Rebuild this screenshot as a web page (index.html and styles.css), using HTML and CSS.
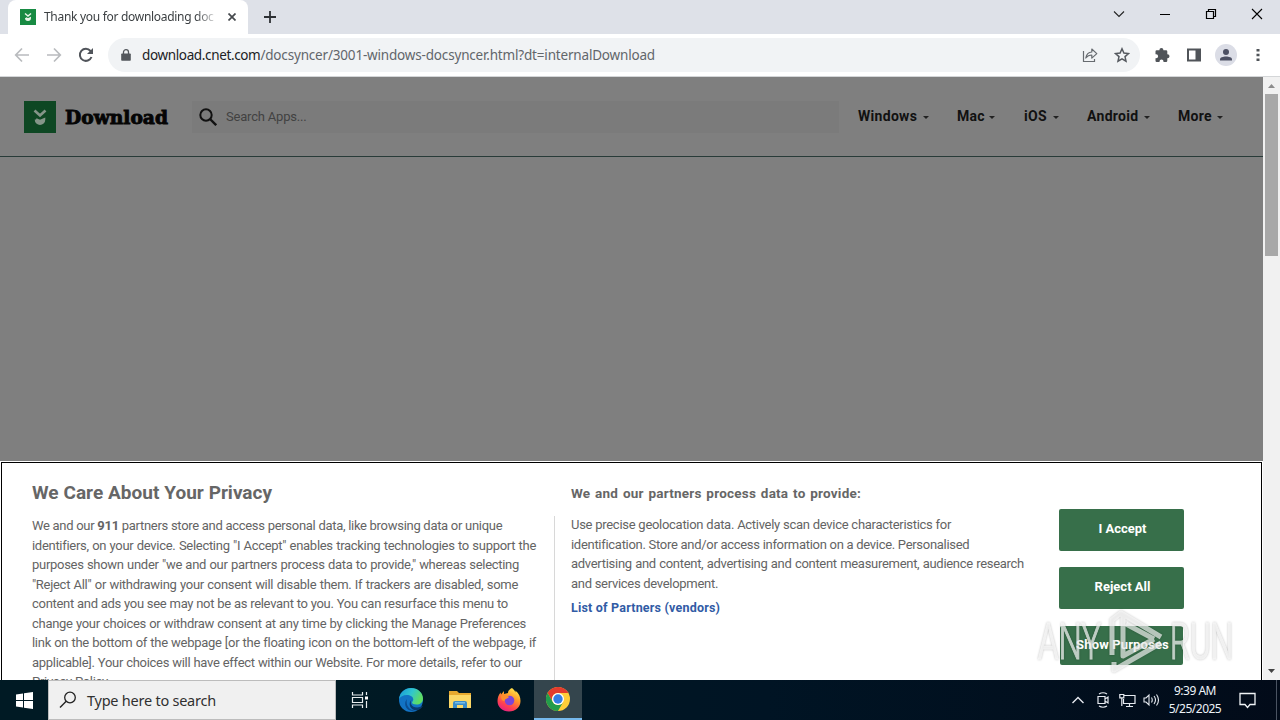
FILE: index.html
```html
<!DOCTYPE html>
<html lang="en">
<head>
<meta charset="utf-8">
<title>Thank you for downloading docsyncer</title>
<link rel="stylesheet" href="styles.css">
</head>
<body>
<div class="screen">
  <header class="tabbar">
    <div class="tab">
      <svg class="favicon" width="16" height="16" viewBox="0 0 32 32"><path fill="#188b43" d="M0 0h32v32H0z"/><path d="M10 9l6 5 6-5M11.500 18l4.500 2 4.500-2c0 6-9 6-9 0" fill="none" stroke="#e9f5e9" stroke-width="3"/></svg>
      <span class="tab-title">Thank you for downloading doc</span>
      <svg class="tab-close" width="8" height="8" viewBox="0 0 8 8"><path d="M.5.5l7 7m0-7l-7 7" stroke="#45494d" stroke-width="1.7"/></svg>
    </div>
    <svg class="newtab" width="12" height="12" viewBox="0 0 12 12"><path d="M6 0v12M0 6h12" stroke="#2e3135" stroke-width="1.8"/></svg>
    <div class="wincontrols">
      <svg width="12" height="12" viewBox="0 0 12 12"><path d="M1 3.5l5 5 5-5" fill="none" stroke="#222" stroke-width="1.1"/></svg>
      <svg width="12" height="12" viewBox="0 0 12 12"><path d="M1 6.5h10" stroke="#000"/></svg>
      <svg width="12" height="12" viewBox="0 0 12 12"><path d="M1.5 3.5h7v7h-7zM3.5 3V1.500h7v7H9" fill="none" stroke="#000" stroke-width="1.2"/></svg>
      <svg width="12" height="12" viewBox="0 0 12 12"><path d="M1 1l10 10M11 1L1 11" stroke="#000" stroke-width="1.1"/></svg>
    </div>
  </header>

  <div class="toolbar">
    <div class="navbtns">
      <svg width="16" height="16" viewBox="0 0 16 16"><path d="M15 8H2M8 1.500L1.700 8 8 14.500" fill="none" stroke="#b9bbbe" stroke-width="1.700"/></svg>
      <svg width="16" height="16" viewBox="0 0 16 16"><path d="M1 8h13M8 1.500L14.300 8 8 14.500" fill="none" stroke="#b9bbbe" stroke-width="1.700"/></svg>
      <svg width="16" height="16" viewBox="0 0 16 16"><path d="M13.500 10A6 6 0 1 1 12.500 4L14 5.500" fill="none" stroke="#50545a" stroke-width="2"/><path d="M15 1v6H9z" fill="#50545a"/></svg>
    </div>
    <div class="omnibox">
      <svg class="lock" width="10" height="12" viewBox="0 0 10 12"><path d="M1 4.500h8q.8 0 .8.800v5.700q0 .8-.8.8H1q-.8 0-.8-.8V5.300q0-.8.8-.8z" fill="#53575c"/><path d="M2.500 5V3a2.500 2.300 0 0 1 5 0v2" fill="none" stroke="#53575c" stroke-width="1.300"/></svg>
      <span class="url"><b>download.cnet.com</b>/docsyncer/3001-windows-docsyncer.html?dt=internalDownload</span>
      <svg class="share" width="16" height="16" viewBox="0 0 16 16"><path d="M1.500 4v10.500h11V12" fill="none" stroke="#676b70" stroke-width="1.200"/><path d="M3.800 11C4.500 7 6.500 5.200 9.800 5V2l5 4.600-5 4.500V8C7.200 8 5.300 9 3.800 11z" fill="none" stroke="#676b70" stroke-width="1.200" stroke-linejoin="round"/></svg>
      <svg width="16" height="16" viewBox="0 0 16 16"><path d="M8 1.800l1.900 4.300 4.600.4-3.500 3.100 1 4.600L8 11.800l-4 2.400 1-4.600-3.500-3.100 4.600-.4z" fill="none" stroke="#55595f" stroke-width="1.500"/></svg>
    </div>
    <div class="tools">
      <svg width="16" height="16" viewBox="0 0 16 16"><path d="M1.500 4.500q0-1.200 1.200-1.200h2.700V3a2 2 0 0 1 4 0v.3h2.700q1.200 0 1.200 1.200v2.700h.2a2 2 0 0 1 0 4h-.2v2.600q0 1.200-1.200 1.200H9.500v-.6a2 2 0 0 0-4 0v.6H2.700q-1.200 0-1.200-1.200v-2.500h.6a2 2 0 0 0 0-4h-.6z" fill="#505459"/></svg>
      <svg width="16" height="16" viewBox="0 0 16 16"><path d="M1 1.500h14v13H1z" fill="#505459"/><path d="M3 3.500h6.500v9H3z" fill="#fff"/></svg>
      <svg width="22" height="22" viewBox="0 0 22 22"><circle cx="11" cy="11" r="11" fill="#dbdde6"/><circle cx="11" cy="8" r="3" fill="#4c5063"/><path d="M5 16.500v-1.200C5 11.500 17 11.500 17 15.300v1.200z" fill="#4c5063"/></svg>
      <svg width="4" height="14" viewBox="0 0 4 14"><path d="M.5 1h3v2.600h-3zM.5 5.700h3v2.600h-3zM.5 10.400h3V13h-3z" fill="#505459"/></svg>
    </div>
  </div>

  <div class="viewport">
    <main class="page">
      <div class="siteheader">
        <svg width="32" height="32" viewBox="0 0 32 32"><path fill="#0e4723" d="M0 0h32v32H0z"/><path d="M10.500 9.500l5.500 5 5.500-5M12 18.500l4 1.800 4-1.800c0 5.500-8 5.500-8 0" fill="none" stroke="#859589" stroke-width="2.600"/></svg>
        <svg class="wordmark" width="106" height="28" viewBox="0 0 106 28"><text x="1" y="21" textLength="103" lengthAdjust="spacingAndGlyphs">Download</text></svg>
        <div class="sitesearch">
          <svg width="18" height="18" viewBox="0 0 18 18"><circle cx="7" cy="7" r="5.700" fill="none" stroke="#111" stroke-width="2"/><path d="M11 11l6.200 6.200" stroke="#111" stroke-width="2.400"/></svg>
          <span>Search Apps...</span>
        </div>
        <nav class="menu">
          <span class="m1">Windows<i></i></span><span class="m2">Mac<i></i></span><span class="m3">iOS<i></i></span><span class="m4">Android<i></i></span><span class="m5">More<i></i></span>
        </nav>
      </div>
      <section class="consent">
        <div class="col-privacy">
          <h2>We Care About Your Privacy</h2>
          <div class="copy bordered">
            <p class="w470">We and our <b>911</b> partners store and access personal data, like browsing data or unique</p>
            <p class="w504">identifiers, on your device. Selecting "I Accept" enables tracking technologies to support the</p>
            <p class="w487">purposes shown under "we and our partners process data to provide," whereas selecting</p>
            <p class="w486">"Reject All" or withdrawing your consent will disable them. If trackers are disabled, some</p>
            <p class="w476">content and ads you see may not be as relevant to you. You can resurface this menu to</p>
            <p class="w494">change your choices or withdraw consent at any time by clicking the Manage Preferences</p>
            <p class="w504">link on the bottom of the webpage [or the floating icon on the bottom-left of the webpage, if</p>
            <p class="w490">applicable]. Your choices will have effect within our Website. For more details, refer to our</p>
            <p class="w78">Privacy Policy.</p>
          </div>
        </div>
        <div class="col-partners">
          <h3>We and our partners process data to provide:</h3>
          <div class="copy">
            <p class="w380">Use precise geolocation data. Actively scan device characteristics for</p>
            <p class="w398">identification. Store and/or access information on a device. Personalised</p>
            <p class="w453">advertising and content, advertising and content measurement, audience research</p>
            <p class="w146">and services development.</p>
          </div>
          <a class="vendors">List of Partners (vendors)</a>
        </div>
        <div class="actions">
          <div class="btn accept">I Accept</div>
          <div class="btn reject">Reject All</div>
          <div class="btn purposes">Show Purposes</div>
        </div>
      </section>
    </main>
    <aside class="scrollbar">
      <svg width="7" height="4" viewBox="0 0 7 4"><path d="M0 4L3.500 0 7 4z" fill="#8c8c8c"/></svg>
      <div class="thumb"></div>
      <svg class="down" width="7" height="4" viewBox="0 0 7 4"><path d="M0 0l3.500 4L7 0z" fill="#444"/></svg>
    </aside>
  </div>

  <footer class="taskbar">
    <div class="start"><svg width="17" height="17" viewBox="0 0 17 17"><path d="M0 2.500l7-1v6.600H0zM8 1.300L17 0v8.100H8zM0 9h7v6.500l-7-1zM8 9h9v8l-9-1.300z" fill="#fff"/></svg></div>
    <div class="search">
      <svg width="18" height="18" viewBox="0 0 18 18"><circle cx="11" cy="6.500" r="5.300" fill="none" stroke="#222" stroke-width="1.300"/><path d="M7.200 10.300L1 16.500" stroke="#222" stroke-width="1.400"/></svg>
      <span>Type here to search</span>
    </div>
    <div class="apps">
      <div><svg width="18" height="18" viewBox="0 0 18 18"><path d="M1.500 1v3h10V1M1.500 17v-3h10v3M1.500 6.500h10v5h-10zM15.500 1v3M15.500 10v7" fill="none" stroke="#e8eef0" stroke-width="1.200"/><path d="M14 5.500h3v3h-3z" fill="#fff"/></svg></div>
      <div><svg width="26" height="26" viewBox="0 0 26 26"><defs><linearGradient id="eg" x1="0" y1="0" x2="1" y2=".4"><stop offset="0" stop-color="#1695d8"/><stop offset=".55" stop-color="#30c6cf"/><stop offset="1" stop-color="#5fdc62"/></linearGradient></defs><circle cx="13" cy="13" r="12" fill="#1273c4"/><path d="M1 12C2 5 7 1 13 1c7 0 12 5 12 10.500 0 4-3 6-6.500 6-3 0-4.500-1-4.500-2 0-.8 1.300-1.200 1.300-3C15.300 9.500 12 8 9 8c-4 0-7 2-8 4z" fill="url(#eg)"/><path d="M9 12c-2 7 4 13 10 11-9 4-15-5-10-11z" fill="#0b4d91"/><path d="M14.200 12c-3.200 3.500-.8 8.500 5 8.500 2 0 3.500-.8 4.700-1.500.5-.3.900.2.500.8-1.300 1.700-3 3-5 3.500-7 .7-10.500-7-5.200-11.300z" fill="#0a3a70"/></svg></div>
      <div><svg width="22" height="20" viewBox="0 0 22 20"><path d="M0 1h8l2 2h12v15H0z" fill="#e7a92f"/><path d="M0 5h22v13H0z" fill="#fbd766"/><path d="M4 18v-5q0-2 2-2h10q2 0 2 2v5h-4v-3H8v3z" fill="#3a8cc9"/><path d="M6 12h10v1.500H6z" fill="#78bce4"/></svg></div>
      <div><svg width="24" height="24" viewBox="0 0 24 24"><defs><linearGradient id="fx" x1=".8" y1="0" x2=".3" y2="1"><stop offset="0" stop-color="#fff050"/><stop offset=".4" stop-color="#ff9a28"/><stop offset=".75" stop-color="#ff4050"/><stop offset="1" stop-color="#e52084"/></linearGradient></defs><path d="M15 0c2 1.500 3 3 3.500 4.500 0-1 0-1.500-.2-2C22 5 23.500 9 23.500 13c0 6-5 10.500-11.500 10.500S.5 19 .5 13c0-3 1-6 3-8.500l.5 2L7 3v3l4-1c0-2.500 2-4 4-5z" fill="url(#fx)"/><circle cx="12.500" cy="12.500" r="4.800" fill="#7c44d9"/><path d="M4 8c3-2 6-1 8 1-1 2-4 1-4.500 4C5 13 4 11 4 8z" fill="#ff8f2c"/></svg></div>
      <div class="active"><svg width="24" height="24" viewBox="0 0 24 24"><circle cx="12" cy="12" r="12" fill="#ffcd38"/><path d="M1.600 6A12 12 0 0 1 22.400 6H12a6 6 0 0 0-5.200 9z" fill="#e33b2e"/><path d="M1.600 6A12 12 0 0 0 12 24l5.200-9a6 6 0 0 1-10.400 0z" fill="#229c4b"/><circle cx="12" cy="12" r="6" fill="#fff"/><circle cx="12" cy="12" r="4.700" fill="#347de4"/></svg></div>
    </div>
    <div class="tray">
      <svg width="12" height="8" viewBox="0 0 12 8"><path d="M.5 7L6 1.500 11.500 7" fill="none" stroke="#e6eaf0" stroke-width="1.400"/></svg>
      <svg class="meet" width="12" height="16" viewBox="0 0 12 16"><path d="M1 4.500h7v7H1zM8 7l3-2v6L8 9M2 2q4-2.500 8 0M2 14q4 2.500 8 0" fill="none" stroke="#e6eaf0" stroke-width="1.200"/></svg>
      <svg class="net" width="17" height="15" viewBox="0 0 17 15"><path d="M5 2.500h11v8H4.500V6M7 13.500h7M10.500 10.500v3" fill="none" stroke="#e6eaf0" stroke-width="1.200"/><path d="M.8 1.500h4v3.300h-4zM2.800 5v8" fill="none" stroke="#e6eaf0" stroke-width="1.200"/></svg>
      <svg class="vol" width="17" height="14" viewBox="0 0 17 14"><path d="M1 5h2l3-3v10L3 9H1zM8.500 4.500q1.500 2.500 0 5M11 3q3 4 0 8M13.500 1.500q4 5.500 0 11" fill="none" stroke="#e6eaf0" stroke-width="1.100"/></svg>
      <div class="clock"><span>9:39 AM</span><span>5/25/2025</span></div>
      <svg class="note" width="17" height="17" viewBox="0 0 17 17"><path d="M1 1.500h15v11h-5L8.500 15.500 6 12.500H1z" fill="none" stroke="#f0f3f6" stroke-width="1.300"/></svg>
    </div>
  </footer>

  <svg class="watermark" width="208" height="74" viewBox="0 0 208 74">
    <g class="wm-letters"><text x="4" y="53" textLength="63" lengthAdjust="spacingAndGlyphs">ANY</text><text x="136" y="53" textLength="63" lengthAdjust="spacingAndGlyphs">RUN</text></g>
    <path class="wm-play" d="M78 49V14l9-7 40 24M89 9v41l31-17M80 56v8l47-27M92 18l28 15"/>
  </svg>
</div>
</body>
</html>
```
FILE: styles.css
```css
* { box-sizing: border-box; }
body { margin: 0; font-family: Roboto, "Liberation Sans", sans-serif; }
svg { display: block; flex: none; }
p, h2, h3 { margin: 0; }
.screen { position: relative; width: 1280px; height: 720px; overflow: hidden; display: flex; flex-direction: column; background: #fff; }

.tabbar { height: 34px; background: #dee1e8; display: flex; align-items: flex-start; }
.tab { width: 240px; height: 34px; margin-left: 8px; background: #fff; border-radius: 8px 8px 0 0; display: flex; align-items: center; padding-left: 12px; }
.tab-title { width: 172px; margin-left: 8px; white-space: nowrap; font: 12px/18px "Noto Sans", sans-serif; letter-spacing: -.3px; color: #3c4043; -webkit-mask-image: linear-gradient(90deg, #000 88%, transparent 102%); mask-image: linear-gradient(90deg, #000 88%, transparent 102%); }
.tab-close { margin-left: 12px; }
.newtab { margin: 11px 0 0 16px; }
.wincontrols { display: flex; gap: 34px; margin: 8px 17px 0 auto; }

.toolbar { height: 43px; background: #fff; border-bottom: 1px solid #d4d6d8; display: flex; align-items: center; }
.navbtns { display: flex; gap: 16px; margin-left: 14px; }
.omnibox { width: 1032px; height: 34px; margin-left: 14px; padding: 0 10px 0 13px; border-radius: 17px; background: #f1f3f5; display: flex; align-items: center; }
.url { margin-left: 11px; font: 13.5px/20px "Noto Sans", sans-serif; letter-spacing: -.18px; color: #62666b; white-space: nowrap; }
.url b { font-weight: 400; color: #202124; letter-spacing: -.36px; }
.share { margin: 0 16px 0 auto; }
.tools { display: flex; align-items: center; gap: 16px; margin-left: 14px; }
.tools svg:nth-child(3) { margin-left: -3px; }
.tools svg:nth-child(4) { margin-left: 3px; }

.viewport { height: 603px; display: flex; }
.page { width: 1263px; height: 603px; background: #7f7f7f; overflow: hidden; }
.siteheader { height: 80px; border-bottom: 1px solid #283b38; display: flex; align-items: center; padding-left: 24px; }
.wordmark { margin-left: 8px; }
.wordmark text { font: 900 19px "DejaVu Serif", serif; fill: #050505; stroke: #050505; stroke-width: .9px; }
.sitesearch { width: 647px; height: 32px; margin-left: 22px; background: #7b7b7b; padding-left: 7px; display: flex; align-items: center; gap: 9px; color: #424242; font-size: 13px; letter-spacing: -.2px; }
.menu { display: flex; margin-left: 19px; font-size: 14px; line-height: 18px; font-weight: 700; color: #111; }
.menu span { display: flex; align-items: center; justify-content: space-between; letter-spacing: .3px; margin-top: -1px; }
.menu i { border: 3.5px solid transparent; border-top-color: #222; border-bottom: 0; margin-top: 2px; }
.m1 { width: 71px; } .m2 { width: 38px; } .m3 { width: 35px; } .m4 { width: 63px; } .m5 { width: 45px; }
.m2, .m4, .m5 { margin-left: 28px; }
.m3 { margin-left: 29px; }

.consent { height: 242px; margin-top: 304px; background: #fff; border: 1px solid #fff; outline: 1px solid #000; outline-offset: -2px; display: flex; padding: 0 0 0 31px; color: #666; }
.col-privacy { width: 523px; padding-top: 19px; }
.col-privacy h2 { font-size: 19px; line-height: 24px; width: 240px; white-space: nowrap; text-align-last: justify; }
.copy { font-size: 13px; line-height: 19.5px; color: #646464; }
.copy p { white-space: nowrap; text-align-last: justify; letter-spacing: -.29px; }
.bordered { margin-top: 11px; height: 190px; border-right: 1px solid #d8d8d8; }
.w470 { width: 470px; } .w504 { width: 504px; } .w487 { width: 487px; } .w486 { width: 486px; }
.w476 { width: 476px; } .w494 { width: 494px; } .w490 { width: 490px; } .w78 { width: 78px; }
.col-partners { width: 488px; padding: 21px 0 0 16px; }
.col-partners h3 { width: 290px; font-size: 13.500px; line-height: 20px; letter-spacing: .22px; white-space: nowrap; text-align-last: justify; }
.col-partners .copy { margin-top: 12px; }
.w380 { width: 380px; } .w398 { width: 398px; } .w453 { width: 453px; } .w146 { width: 146px; }
.vendors { display: block; margin-top: 5px; width: 149px; color: #315ba5; font-size: 12.500px; line-height: 19px; font-weight: 700; white-space: nowrap; letter-spacing: .2px; }
.actions { width: 125px; margin-left: 16px; padding-top: 47px; display: flex; flex-direction: column; align-items: flex-start; gap: 16px; }
.btn { width: 125px; height: 42px; background: #376f4a; border-radius: 2px; color: #fff; font-size: 13px; font-weight: 700; line-height: 40px; text-align: center; white-space: nowrap; padding-left: 2px; }
.purposes { height: 39px; margin-top: 1px; line-height: 38px; margin-left: 1px; width: 123px; letter-spacing: .15px; }
.scrollbar { width: 17px; background: #f1f1f1; display: flex; flex-direction: column; align-items: center; padding: 7px 0; }
.thumb { width: 13px; height: 162px; margin-top: 6px; background: #a8a8a8; }
.down { margin-top: auto; }

.taskbar { height: 40px; background: linear-gradient(90deg, #001a24 0 25%, #001424 60%, #020b19 100%); display: flex; }
.start { width: 48px; display: grid; place-items: center; }
.search { width: 288px; background: #f0f0f0; border: 1px solid #bcbcbc; display: flex; align-items: center; padding-left: 10px; gap: 10px; font: 14.500px/20px "Noto Sans", sans-serif; color: #303030; white-space: nowrap; letter-spacing: -.24px; }
.apps { display: flex; }
.apps div { width: 48px; display: grid; place-items: center; }
.apps div:nth-child(2) { width: 53px; }
.apps div:nth-child(3) { width: 46px; }
.apps div:nth-child(4) { width: 51px; }
.apps .active { width: 48px; background: #34454d; border-bottom: 2px solid #76b9ed; }
.tray { display: flex; align-items: center; margin-left: auto; padding-right: 20px; border-right: 1px solid #4a5361; margin-right: 3px; width: 205px; }
.meet { margin-left: 13px; } .net { margin-left: 10px; } .vol { margin-left: 7px; }
.clock { width: 60px; margin-left: 5px; display: flex; flex-direction: column; align-items: center; font: 12px/18px "Noto Sans", sans-serif; letter-spacing: -.5px; color: #edf2f8; }
.note { margin-left: 14px; }
.watermark { position: absolute; left: 1034px; top: 606px; filter: drop-shadow(0 0 1px rgba(0,0,0,.35)); }
.wm-letters { font: 300 50px Roboto, sans-serif; fill: #fff; stroke: #fff; stroke-width: 1.2px; opacity: .7; }
.wm-play { fill: none; stroke: #fff; stroke-width: 5px; stroke-linejoin: round; opacity: .65; }
```
